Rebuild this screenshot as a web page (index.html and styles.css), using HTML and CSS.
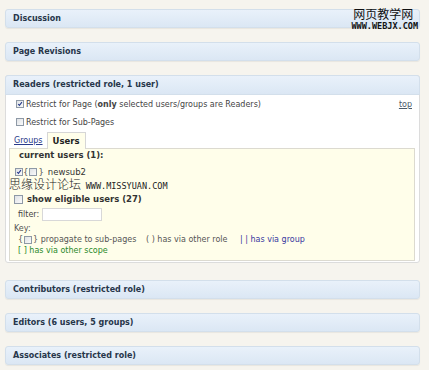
FILE: index.html
```html
<!DOCTYPE html>
<html lang="en">
<head>
    <meta charset="UTF-8">
    <title>Page Options</title>
    <link rel="stylesheet" href="styles.css">
</head>
<body>
    <div class="stamp-top">
        <div class="stamp-cn">网页教学网</div>
        <div class="stamp-url">WWW.WEBJX.COM</div>
    </div>
    <div class="box-bar">Discussion</div>
    <div class="box-bar">Page Revisions</div>
    <div class="panel">
        <div class="box-bar panel-head">Readers (restricted role, 1 user)</div>
        <div class="panel-body">
            <div class="check-row">
                <label><input type="checkbox" checked><span>Restrict for Page (<b>only</b> selected users/groups are Readers)</span></label>
                <a href="#" class="top-link">top</a>
            </div>
            <div class="check-row second">
                <label><input type="checkbox"><span>Restrict for Sub-Pages</span></label>
            </div>
            <div class="tabs">
                <a href="#" class="tab-link">Groups</a>
                <span class="tab-active">Users</span>
            </div>
            <div class="user-box">
                <div class="current">current users (1):</div>
                <div class="user-row">
                    <input type="checkbox" checked><span class="brace">{<input type="checkbox">}</span><span>newsub2</span>
                </div>
                <div class="stamp-mid">思缘设计论坛 <span>WWW.MISSYUAN.COM</span></div>
                <div class="eligible"><input type="checkbox"><span>show eligible users (27)</span></div>
                <div class="filter"><span>filter:</span><input type="text"></div>
                <div class="key">Key:</div>
                <div class="key-row">
                    <span class="key-prop">{<input type="checkbox">}&nbsp;propagate to sub-pages</span>
                    <span class="key-role">( ) has via other role</span>
                    <span class="key-group">| | has via group</span>
                </div>
                <div class="key-scope">[ ] has via other scope</div>
            </div>
        </div>
    </div>
    <div class="box-bar gap-big">Contributors (restricted role)</div>
    <div class="box-bar">Editors (6 users, 5 groups)</div>
    <div class="box-bar">Associates (restricted role)</div>
</body>
</html>
```

FILE: styles.css
```css
body {
    background: #f6f4ee;
    color: #333;
    font-family: "DejaVu Sans", Verdana, sans-serif;
    font-size: 8px;
    margin: 0;
    padding: 9px 9px 0 5px;
    position: relative;
}
.box-bar {
    height: 17px;
    line-height: 17px;
    padding-left: 7px;
    border: 1px solid #d3dfeb;
    border-radius: 3px;
    background: linear-gradient(to bottom, #e9f1fa, #dbe7f4);
    box-shadow: 0 1px 1px rgba(0, 0, 0, 0.06);
    color: #27364a;
    font-weight: bold;
    font-size: 8px;
    margin-bottom: 14px;
}
.gap-big {
    margin-top: 17px;
}
.panel {
    border: 1px solid #dcdcdc;
    border-radius: 3px;
    background: #fff;
}
.panel .panel-head {
    margin: -1px -1px 0 -1px;
    height: 18px;
    line-height: 18px;
    border-radius: 3px 3px 0 0;
    box-shadow: none;
}
.panel-body {
    padding: 2px 4px 1px 3px;
}
.check-row {
    display: flex;
    align-items: center;
    justify-content: space-between;
    height: 14px;
    color: #444;
}
.check-row.second {
    margin-top: 4px;
}
.check-row label {
    display: flex;
    align-items: center;
}
input[type="checkbox"] {
    appearance: none;
    -webkit-appearance: none;
    width: 8px;
    height: 8px;
    margin: 0 2px 0 7px;
    border: 1px solid #8e99a6;
    background: linear-gradient(to bottom right, #dfe2e6, #fafafa);
    box-sizing: border-box;
}
input[type="checkbox"]:checked {
    background: url("data:image/svg+xml,%3Csvg xmlns='http://www.w3.org/2000/svg' viewBox='0 0 8 8'%3E%3Cpath d='M1.5 4 L3.2 5.8 L6.6 1.6' fill='none' stroke='%23263a8a' stroke-width='1.4'/%3E%3C/svg%3E") no-repeat center / 100%, linear-gradient(to bottom right, #dfe2e6, #fafafa);
}
.top-link {
    color: #4a5a6a;
    margin-right: 3px;
}
.tabs {
    display: flex;
    align-items: flex-end;
    height: 16px;
    margin-top: 3px;
    padding-left: 5px;
}
.tab-link {
    color: #2a3a8a;
    font-size: 8px;
    line-height: 14px;
    margin-right: 4px;
}
.tab-active {
    border: 1px solid #d6d6d6;
    border-bottom: none;
    background: #fffeea;
    font-weight: bold;
    font-size: 8.5px;
    color: #222;
    padding: 0 5px;
    height: 16px;
    line-height: 17px;
    margin-bottom: -1px;
}
.user-box {
    background: #fffeea;
    border: 1px solid #dcdad0;
    padding: 0 4px 4px 4px;
}
.current {
    font-weight: bold;
    font-size: 8.5px;
    color: #333;
    padding-left: 5px;
    line-height: 12px;
    height: 12px;
}
.user-row {
    display: flex;
    align-items: center;
    margin-top: 5px;
    font-size: 8.5px;
    height: 12px;
    color: #333;
}
.user-row > input {
    margin-left: 1px;
    margin-right: 0;
}
.brace {
    display: flex;
    align-items: center;
    margin-right: 4px;
    color: #555;
}
.brace input {
    margin: 0 1px;
}
.stamp-mid {
    font-family: "Noto Sans CJK SC", sans-serif;
    font-weight: 300;
    font-size: 12px;
    color: #222;
    line-height: 12px;
    margin-left: -5px;
    height: 12px;
    white-space: nowrap;
}
.stamp-mid span {
    font-family: "DejaVu Sans Mono", monospace;
    font-weight: normal;
    font-size: 8.5px;
    margin-left: 2px;
}
.eligible {
    display: flex;
    align-items: center;
    font-weight: bold;
    font-size: 8.5px;
    color: #333;
    height: 16px;
    margin-top: 1px;
}
.eligible input {
    margin: 0 4px 0 0;
    width: 9px;
    height: 9px;
}
.filter {
    display: flex;
    align-items: center;
    gap: 3px;
    padding-left: 4px;
    font-size: 8px;
    color: #444;
    height: 14px;
}
.filter input {
    width: 60px;
    height: 13px;
    border: 1px solid #d8d8d8;
    padding: 0;
    box-sizing: border-box;
}
.key {
    color: #555;
    line-height: 11px;
    margin-top: 2px;
}
.key-row {
    display: flex;
    align-items: center;
    padding-left: 4px;
    height: 11px;
    color: #555;
}
.key-prop {
    display: flex;
    align-items: center;
    width: 128px;
}
.key-prop input {
    margin: 0 1px;
}
.key-role {
    width: 94px;
}
.key-group {
    color: #3838a0;
}
.key-scope {
    color: #2a8a2a;
    padding-left: 4px;
    line-height: 11px;
}
.stamp-top {
    position: absolute;
    top: 6px;
    right: 11px;
    text-align: center;
}
.stamp-cn {
    font-family: "Noto Sans CJK SC", sans-serif;
    font-size: 12px;
    line-height: 15px;
    color: #111;
    padding-right: 3px;
}
.stamp-url {
    font-family: "DejaVu Sans Mono", monospace;
    font-weight: bold;
    font-size: 8.5px;
    color: #111;
    line-height: 11px;
}
```
